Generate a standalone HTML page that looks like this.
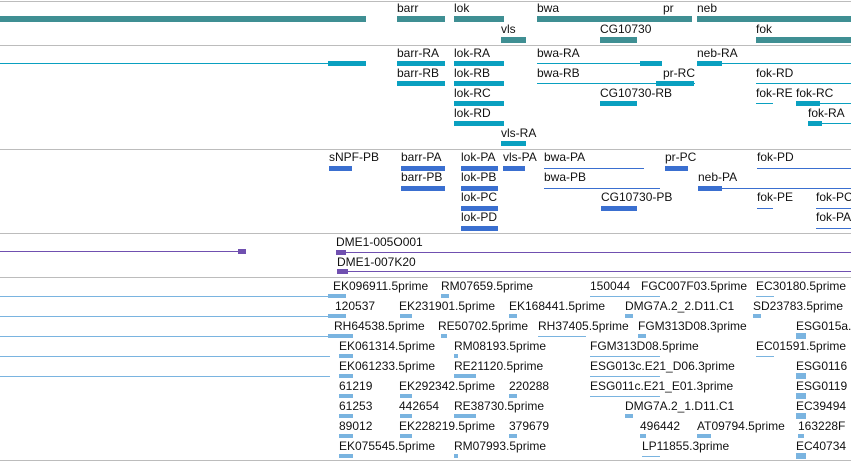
<!DOCTYPE html>
<html><head><meta charset="utf-8"><style>
body{margin:0;width:851px;height:461px;overflow:hidden;background:#fff;position:relative;font-family:"Liberation Sans",sans-serif;font-size:12px;color:#111}
div{position:absolute}
.t{line-height:14px;white-space:nowrap}
.s{height:1px;background:#bcbcbc;left:0;width:851px}
.g{background:#3f8f93;height:6px}
.r{background:#0aa0c0}
.p{background:#3a6fd0}
.u{background:#7050b0}
.e{background:#7ab4e0}
</style></head><body>
<div class="s" style="top:1px"></div><div class="s" style="top:45px"></div><div class="s" style="top:149px"></div><div class="s" style="top:233px"></div><div class="s" style="top:277px"></div><div class="s" style="top:460px"></div>

<!-- genes -->
<div class="t" style="left:397px;top:1px">barr</div><div class="t" style="left:454px;top:1px">lok</div><div class="t" style="left:537px;top:1px">bwa</div><div class="t" style="left:663px;top:1px">pr</div><div class="t" style="left:697px;top:1px">neb</div>
<div class="t" style="left:501px;top:22px">vls</div><div class="t" style="left:600px;top:22px">CG10730</div><div class="t" style="left:756px;top:22px">fok</div>
<div class="g" style="left:0;top:16px;width:366px"></div><div class="g" style="left:397px;top:16px;width:48px"></div><div class="g" style="left:454px;top:16px;width:50px"></div><div class="g" style="left:537px;top:16px;width:155px"></div><div class="g" style="left:697px;top:16px;width:154px"></div>
<div class="g" style="left:501px;top:37px;width:25px"></div><div class="g" style="left:600px;top:37px;width:37px"></div><div class="g" style="left:756px;top:37px;width:95px"></div>

<!-- transcripts -->
<div class="t" style="left:397px;top:46px">barr-RA</div><div class="t" style="left:454px;top:46px">lok-RA</div><div class="t" style="left:537px;top:46px">bwa-RA</div><div class="t" style="left:697px;top:46px">neb-RA</div>
<div class="r" style="left:0;top:63px;width:366px;height:1px"></div><div class="r" style="left:328px;top:61px;width:38px;height:5px"></div>
<div class="r" style="left:397px;top:61px;width:48px;height:5px"></div><div class="r" style="left:454px;top:61px;width:50px;height:5px"></div>
<div class="r" style="left:537px;top:63px;width:125px;height:1px"></div><div class="r" style="left:640px;top:61px;width:22px;height:5px"></div>
<div class="r" style="left:697px;top:63px;width:154px;height:1px"></div><div class="r" style="left:697px;top:61px;width:25px;height:5px"></div>
<div class="t" style="left:397px;top:66px">barr-RB</div><div class="t" style="left:454px;top:66px">lok-RB</div><div class="t" style="left:537px;top:66px">bwa-RB</div><div class="t" style="left:663px;top:66px">pr-RC</div><div class="t" style="left:756px;top:66px">fok-RD</div>
<div class="r" style="left:397px;top:81px;width:48px;height:5px"></div><div class="r" style="left:454px;top:81px;width:50px;height:5px"></div><div class="r" style="left:537px;top:83px;width:158px;height:1px"></div><div class="r" style="left:656px;top:81px;width:38px;height:5px"></div><div class="r" style="left:756px;top:83px;width:95px;height:1px"></div>
<div class="t" style="left:454px;top:86px">lok-RC</div><div class="t" style="left:600px;top:86px">CG10730-RB</div><div class="t" style="left:756px;top:86px">fok-RE</div><div class="t" style="left:796px;top:86px">fok-RC</div>
<div class="r" style="left:454px;top:101px;width:50px;height:5px"></div><div class="r" style="left:600px;top:101px;width:37px;height:5px"></div><div class="r" style="left:756px;top:103px;width:17px;height:1px"></div><div class="r" style="left:796px;top:101px;width:24px;height:5px"></div><div class="r" style="left:796px;top:103px;width:55px;height:1px"></div>
<div class="t" style="left:454px;top:106px">lok-RD</div><div class="t" style="left:808px;top:106px">fok-RA</div>
<div class="r" style="left:454px;top:121px;width:50px;height:5px"></div><div class="r" style="left:808px;top:121px;width:14px;height:5px"></div><div class="r" style="left:808px;top:123px;width:43px;height:1px"></div>
<div class="t" style="left:501px;top:126px">vls-RA</div><div class="r" style="left:501px;top:141px;width:25px;height:5px"></div>

<!-- proteins -->
<div class="t" style="left:329px;top:150px">sNPF-PB</div><div class="t" style="left:401px;top:150px">barr-PA</div><div class="t" style="left:461px;top:150px">lok-PA</div><div class="t" style="left:503px;top:150px">vls-PA</div><div class="t" style="left:544px;top:150px">bwa-PA</div><div class="t" style="left:665px;top:150px">pr-PC</div><div class="t" style="left:757px;top:150px">fok-PD</div>
<div class="p" style="left:329px;top:166px;width:23px;height:5px"></div><div class="p" style="left:401px;top:166px;width:44px;height:5px"></div><div class="p" style="left:461px;top:166px;width:37px;height:5px"></div><div class="p" style="left:503px;top:166px;width:22px;height:5px"></div><div class="p" style="left:544px;top:168px;width:100px;height:1px"></div><div class="p" style="left:665px;top:166px;width:23px;height:5px"></div><div class="p" style="left:757px;top:168px;width:94px;height:1px"></div>
<div class="t" style="left:401px;top:170px">barr-PB</div><div class="t" style="left:461px;top:170px">lok-PB</div><div class="t" style="left:544px;top:170px">bwa-PB</div><div class="t" style="left:698px;top:170px">neb-PA</div>
<div class="p" style="left:401px;top:186px;width:44px;height:5px"></div><div class="p" style="left:461px;top:186px;width:37px;height:5px"></div><div class="p" style="left:544px;top:188px;width:116px;height:1px"></div><div class="p" style="left:698px;top:186px;width:24px;height:5px"></div><div class="p" style="left:698px;top:188px;width:153px;height:1px"></div>
<div class="t" style="left:461px;top:190px">lok-PC</div><div class="t" style="left:601px;top:190px">CG10730-PB</div><div class="t" style="left:757px;top:190px">fok-PE</div><div class="t" style="left:816px;top:190px">fok-PC</div>
<div class="p" style="left:461px;top:206px;width:37px;height:5px"></div><div class="p" style="left:601px;top:206px;width:36px;height:5px"></div><div class="p" style="left:757px;top:208px;width:16px;height:1px"></div><div class="p" style="left:816px;top:208px;width:35px;height:1px"></div>
<div class="t" style="left:461px;top:210px">lok-PD</div><div class="t" style="left:816px;top:210px">fok-PA</div>
<div class="p" style="left:461px;top:226px;width:37px;height:5px"></div><div class="p" style="left:816px;top:228px;width:35px;height:1px"></div>

<!-- clones -->
<div class="t" style="left:336px;top:235px">DME1-005O001</div>
<div class="u" style="left:0;top:251px;width:246px;height:1px"></div><div class="u" style="left:238px;top:249px;width:8px;height:5px"></div>
<div class="u" style="left:336px;top:252px;width:515px;height:1px"></div><div class="u" style="left:336px;top:250px;width:10px;height:5px"></div>
<div class="t" style="left:337px;top:255px">DME1-007K20</div>
<div class="u" style="left:337px;top:271px;width:514px;height:1px"></div><div class="u" style="left:337px;top:269px;width:11px;height:5px"></div>

<!-- ESTs -->
<div class="e" style="left:0;top:296px;width:330px;height:1px"></div><div class="e" style="left:0;top:316px;width:330px;height:1px"></div><div class="e" style="left:0;top:336px;width:330px;height:1px"></div><div class="e" style="left:0;top:356px;width:330px;height:1px"></div><div class="e" style="left:0;top:376px;width:330px;height:1px"></div>
<div class="t" style="left:333px;top:279px">EK096911.5prime</div><div class="t" style="left:441px;top:279px">RM07659.5prime</div><div class="t" style="left:590px;top:279px">150044</div><div class="t" style="left:641px;top:279px">FGC007F03.5prime</div><div class="t" style="left:756px;top:279px">EC30180.5prime</div>
<div class="t" style="left:335px;top:299px">120537</div><div class="t" style="left:399px;top:299px">EK231901.5prime</div><div class="t" style="left:509px;top:299px">EK168441.5prime</div><div class="t" style="left:625px;top:299px">DMG7A.2_2.D11.C1</div><div class="t" style="left:753px;top:299px">SD23783.5prime</div>
<div class="t" style="left:334px;top:319px">RH64538.5prime</div><div class="t" style="left:438px;top:319px">RE50702.5prime</div><div class="t" style="left:538px;top:319px">RH37405.5prime</div><div class="t" style="left:638px;top:319px">FGM313D08.3prime</div><div class="t" style="left:796px;top:319px">ESG015a.</div>
<div class="t" style="left:339px;top:339px">EK061314.5prime</div><div class="t" style="left:454px;top:339px">RM08193.5prime</div><div class="t" style="left:590px;top:339px">FGM313D08.5prime</div><div class="t" style="left:756px;top:339px">EC01591.5prime</div>
<div class="t" style="left:339px;top:359px">EK061233.5prime</div><div class="t" style="left:454px;top:359px">RE21120.5prime</div><div class="t" style="left:590px;top:359px">ESG013c.E21_D06.3prime</div><div class="t" style="left:796px;top:359px">ESG0116</div>
<div class="t" style="left:339px;top:379px">61219</div><div class="t" style="left:399px;top:379px">EK292342.5prime</div><div class="t" style="left:509px;top:379px">220288</div><div class="t" style="left:590px;top:379px">ESG011c.E21_E01.3prime</div><div class="t" style="left:796px;top:379px">ESG0119</div>
<div class="t" style="left:339px;top:399px">61253</div><div class="t" style="left:399px;top:399px">442654</div><div class="t" style="left:454px;top:399px">RE38730.5prime</div><div class="t" style="left:625px;top:399px">DMG7A.2_1.D11.C1</div><div class="t" style="left:796px;top:399px">EC39494</div>
<div class="t" style="left:339px;top:419px">89012</div><div class="t" style="left:399px;top:419px">EK228219.5prime</div><div class="t" style="left:509px;top:419px">379679</div><div class="t" style="left:640px;top:419px">496442</div><div class="t" style="left:697px;top:419px">AT09794.5prime</div><div class="t" style="left:798px;top:419px">163228F</div>
<div class="t" style="left:339px;top:439px">EK075545.5prime</div><div class="t" style="left:454px;top:439px">RM07993.5prime</div><div class="t" style="left:642px;top:439px">LP11855.3prime</div><div class="t" style="left:796px;top:439px">EC40734</div>

<div class="e" style="left:328px;top:294px;width:18px;height:4px"></div><div class="e" style="left:441px;top:294px;width:8px;height:4px"></div><div class="e" style="left:590px;top:296px;width:70px;height:1px"></div><div class="e" style="left:756px;top:296px;width:18px;height:1px"></div>
<div class="e" style="left:328px;top:314px;width:18px;height:4px"></div><div class="e" style="left:400px;top:314px;width:12px;height:4px"></div><div class="e" style="left:509px;top:314px;width:8px;height:4px"></div><div class="e" style="left:625px;top:314px;width:8px;height:4px"></div><div class="e" style="left:753px;top:314px;width:8px;height:4px"></div>
<div class="e" style="left:328px;top:334px;width:25px;height:4px"></div><div class="e" style="left:441px;top:334px;width:6px;height:4px"></div><div class="e" style="left:538px;top:336px;width:48px;height:1px"></div><div class="e" style="left:638px;top:334px;width:8px;height:4px"></div><div class="e" style="left:796px;top:333px;width:10px;height:6px"></div>
<div class="e" style="left:339px;top:354px;width:14px;height:4px"></div><div class="e" style="left:454px;top:354px;width:4px;height:4px"></div><div class="e" style="left:590px;top:356px;width:70px;height:1px"></div><div class="e" style="left:756px;top:356px;width:18px;height:1px"></div>
<div class="e" style="left:339px;top:374px;width:14px;height:4px"></div><div class="e" style="left:454px;top:374px;width:22px;height:4px"></div><div class="e" style="left:590px;top:376px;width:70px;height:1px"></div><div class="e" style="left:796px;top:373px;width:10px;height:6px"></div>
<div class="e" style="left:339px;top:394px;width:14px;height:4px"></div><div class="e" style="left:400px;top:394px;width:12px;height:4px"></div><div class="e" style="left:509px;top:394px;width:8px;height:4px"></div><div class="e" style="left:590px;top:396px;width:70px;height:1px"></div><div class="e" style="left:796px;top:393px;width:10px;height:6px"></div>
<div class="e" style="left:339px;top:414px;width:14px;height:4px"></div><div class="e" style="left:400px;top:414px;width:12px;height:4px"></div><div class="e" style="left:454px;top:414px;width:22px;height:4px"></div><div class="e" style="left:625px;top:414px;width:8px;height:4px"></div><div class="e" style="left:796px;top:413px;width:10px;height:6px"></div>
<div class="e" style="left:339px;top:434px;width:14px;height:4px"></div><div class="e" style="left:400px;top:434px;width:12px;height:4px"></div><div class="e" style="left:509px;top:434px;width:8px;height:4px"></div><div class="e" style="left:640px;top:434px;width:6px;height:4px"></div><div class="e" style="left:697px;top:434px;width:14px;height:4px"></div><div class="e" style="left:798px;top:434px;width:6px;height:4px"></div>
<div class="e" style="left:339px;top:454px;width:14px;height:4px"></div><div class="e" style="left:454px;top:454px;width:4px;height:4px"></div><div class="e" style="left:642px;top:456px;width:18px;height:1px"></div><div class="e" style="left:796px;top:453px;width:10px;height:6px"></div>
</body></html>
